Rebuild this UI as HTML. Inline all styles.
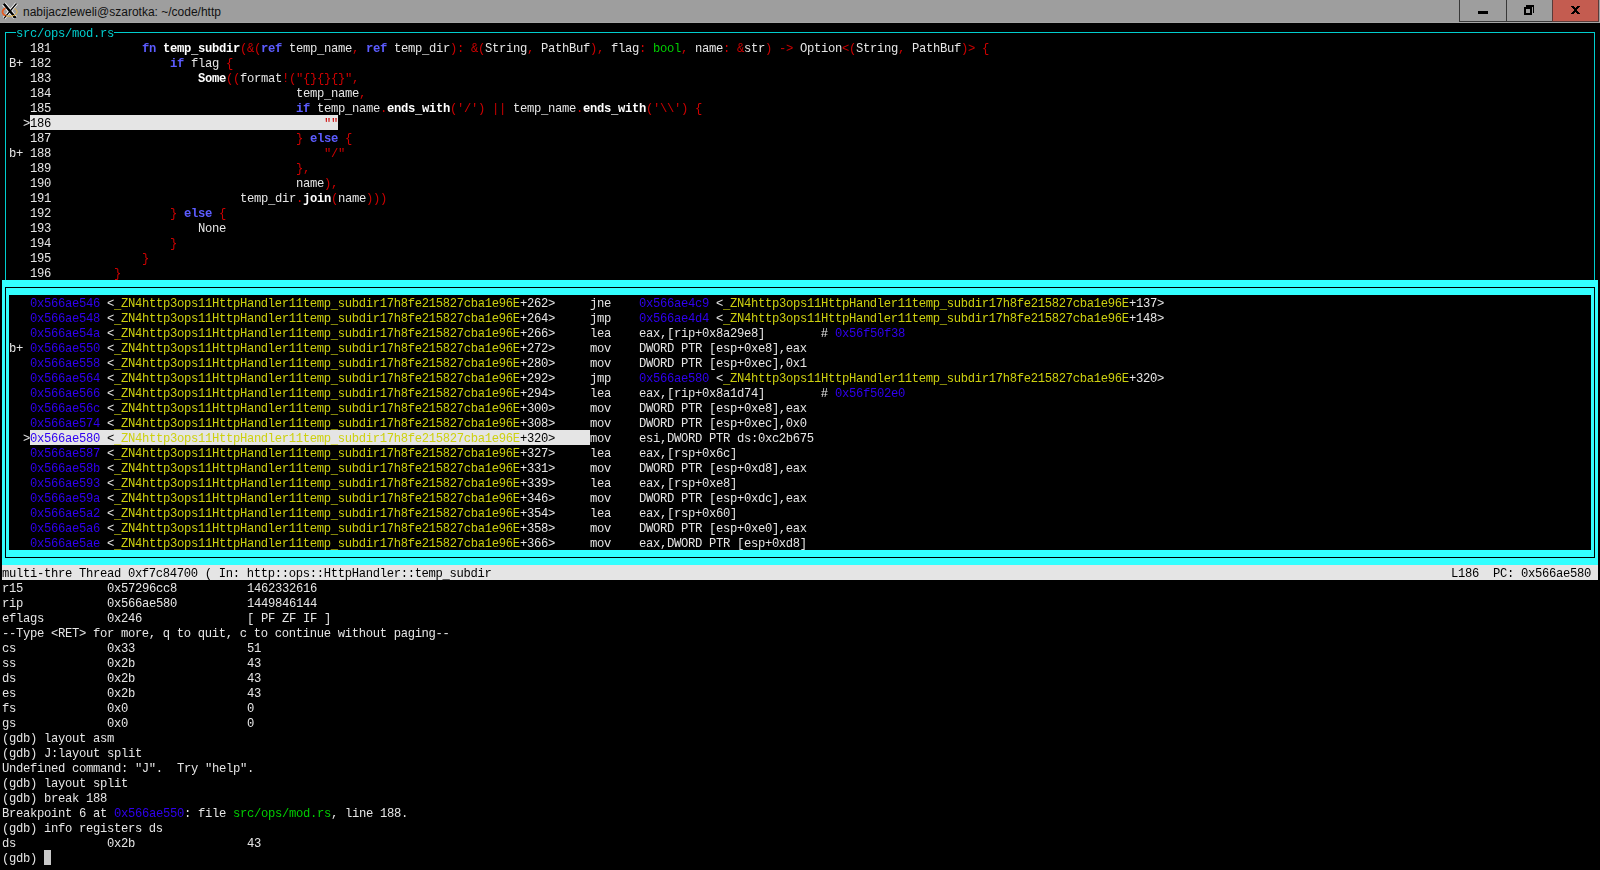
<!DOCTYPE html>
<html><head><meta charset="utf-8">
<style>
html,body{margin:0;padding:0;background:#000;width:1600px;height:870px;overflow:hidden;position:relative}
.a{position:absolute}
#txt{position:absolute;left:0;top:0;width:1600px;height:870px;will-change:transform}
#txt i{font-style:normal;position:relative;top:1px}
#txt span{position:absolute;white-space:pre;font-family:"Liberation Mono",monospace;font-size:12.2px;letter-spacing:-0.3200px;line-height:15px;height:15px;margin-top:2px}
#title{position:absolute;left:0;top:0;width:1600px;height:22px;background:#9e9e9e}
#tl{position:absolute;left:0;top:22px;width:1600px;height:1px;background:#a6a6a6}
#ttext{position:absolute;left:23px;top:4px;font-family:"Liberation Sans",sans-serif;font-size:12px;line-height:16px;color:#111;white-space:pre}
.btn{position:absolute;top:0;height:22px;box-sizing:border-box;border-left:1px solid #383838;border-bottom:1px solid #383838;background:#9e9e9e}
</style></head><body>
<div id="title"></div><div id="tl"></div>
<svg class="a" style="left:0px;top:0px" width="22" height="22" viewBox="0 0 22 22">
  <path d="M3.8 3.8 L15.2 17.5" stroke="#fff" stroke-width="4.2" stroke-linecap="butt"/>
  <path d="M16.5 3.5 L4 18.3" stroke="#fff" stroke-width="3" stroke-linecap="butt"/>
  <path d="M5.5 8 Q2 10 2.5 12.5 Q3 15 6.5 15.8" fill="none" stroke="#e85a20" stroke-width="1.6"/>
  <path d="M3.8 3.8 L15.2 17.5" stroke="#000" stroke-width="2.5" stroke-linecap="butt"/>
  <path d="M16.5 3.5 L4 18.3" stroke="#000" stroke-width="1.3" stroke-linecap="butt"/>
  <path d="M6 15.8 Q11 17.5 15 15 Q18 13 17 11 Q16.5 9.5 14.5 8.5" fill="none" stroke="#e0b048" stroke-width="1"/>
  <path d="M13 16.8 L16 16.5 L16.2 18 L13.5 18 Z" fill="#000"/>
</svg>
<div id="ttext">nabijaczleweli@szarotka: ~/code/http</div>
<div class="btn" style="left:1459px;width:47px"></div>
<div class="a" style="left:1478px;top:11px;width:10px;height:3px;background:#000"></div>
<div class="btn" style="left:1506px;width:47px"></div>
<div class="a" style="left:1526px;top:5px;width:8px;height:8px;box-sizing:border-box;border-top:2px solid #000;border-right:1px solid #000"></div>
<div class="a" style="left:1524px;top:7px;width:8px;height:8px;box-sizing:border-box;border:2px solid #000;background:#9e9e9e"></div>
<div class="btn" style="left:1552px;width:47px;background:#c45c50;border-right:1px solid #5a3a38;border-left-color:#5a3a38;border-bottom-color:#5a3a38"></div>
<svg class="a" style="left:1571px;top:6px" width="9" height="8" viewBox="0 0 9 8" shape-rendering="crispEdges">
  <path d="M0 0h3v1h-3z M6 0h3v1h-3z M1 1h3v1h-3z M5 1h3v1h-3z M2 2h5v1h-5z M3 3h3v2h-3z M2 5h5v1h-5z M1 6h3v1h-3z M5 6h3v1h-3z M0 7h3v1h-3z M6 7h3v1h-3z" fill="#000"/>
</svg>

<!-- src box (cyan lines) -->
<div class="a" style="left:5px;top:32px;width:1590px;height:1px;background:#00cdcd"></div>
<div class="a" style="left:5px;top:32px;width:1px;height:248px;background:#00cdcd"></div>
<div class="a" style="left:1594px;top:32px;width:1px;height:248px;background:#00cdcd"></div>
<div class="a" style="left:16px;top:25px;width:98px;height:15px;background:#000"></div>

<!-- asm box (standout) -->
<div class="a" style="left:2px;top:280px;width:1596px;height:285px;background:#33ffff"></div>
<div class="a" style="left:9px;top:295px;width:1582px;height:255px;background:#000"></div>
<div class="a" style="left:5px;top:287px;width:1590px;height:271px;box-sizing:border-box;border:1px solid #000"></div>

<!-- highlight bars -->
<div class="a" style="left:30px;top:115px;width:308px;height:15px;background:#e5e5e5"></div>
<div class="a" style="left:30px;top:430px;width:560px;height:15px;background:#e5e5e5"></div>
<!-- status -->
<div class="a" style="left:2px;top:565px;width:1596px;height:15px;background:#e5e5e5"></div>
<!-- cursor -->
<div class="a" style="left:44px;top:850px;width:7px;height:15px;background:#c8c8c8"></div>

<div id="txt">
<span style="left:16px;top:25px;color:#00cdcd">src/ops/mod.rs</span>
<span style="left:30px;top:40px;color:#e5e5e5">181</span>
<span style="left:142px;top:40px;color:#5c5cff;font-weight:bold">fn</span>
<span style="left:163px;top:40px;color:#ffffff;font-weight:bold">temp<i>_</i>subdir</span>
<span style="left:240px;top:40px;color:#cd0000">(&amp;(</span>
<span style="left:261px;top:40px;color:#5c5cff;font-weight:bold">ref</span>
<span style="left:282px;top:40px;color:#e5e5e5"> temp<i>_</i>name</span>
<span style="left:352px;top:40px;color:#cd0000">,</span>
<span style="left:366px;top:40px;color:#5c5cff;font-weight:bold">ref</span>
<span style="left:387px;top:40px;color:#e5e5e5"> temp<i>_</i>dir</span>
<span style="left:450px;top:40px;color:#cd0000">): &amp;(</span>
<span style="left:485px;top:40px;color:#e5e5e5">String</span>
<span style="left:527px;top:40px;color:#cd0000">, </span>
<span style="left:541px;top:40px;color:#e5e5e5">PathBuf</span>
<span style="left:590px;top:40px;color:#cd0000">), </span>
<span style="left:611px;top:40px;color:#e5e5e5">flag</span>
<span style="left:639px;top:40px;color:#cd0000">: </span>
<span style="left:653px;top:40px;color:#00cd00">bool</span>
<span style="left:681px;top:40px;color:#cd0000">, </span>
<span style="left:695px;top:40px;color:#e5e5e5">name</span>
<span style="left:723px;top:40px;color:#cd0000">: &amp;</span>
<span style="left:744px;top:40px;color:#e5e5e5">str</span>
<span style="left:765px;top:40px;color:#cd0000">) -&gt; </span>
<span style="left:800px;top:40px;color:#e5e5e5">Option</span>
<span style="left:842px;top:40px;color:#cd0000">&lt;(</span>
<span style="left:856px;top:40px;color:#e5e5e5">String</span>
<span style="left:898px;top:40px;color:#cd0000">, </span>
<span style="left:912px;top:40px;color:#e5e5e5">PathBuf</span>
<span style="left:961px;top:40px;color:#cd0000">)&gt; {</span>
<span style="left:30px;top:55px;color:#e5e5e5">182</span>
<span style="left:170px;top:55px;color:#5c5cff;font-weight:bold">if</span>
<span style="left:184px;top:55px;color:#e5e5e5"> flag </span>
<span style="left:226px;top:55px;color:#cd0000">{</span>
<span style="left:30px;top:70px;color:#e5e5e5">183</span>
<span style="left:198px;top:70px;color:#ffffff;font-weight:bold">Some</span>
<span style="left:226px;top:70px;color:#cd0000">((</span>
<span style="left:240px;top:70px;color:#e5e5e5">format</span>
<span style="left:282px;top:70px;color:#cd0000">!(&quot;{}{}{}&quot;,</span>
<span style="left:30px;top:85px;color:#e5e5e5">184</span>
<span style="left:296px;top:85px;color:#e5e5e5">temp<i>_</i>name</span>
<span style="left:359px;top:85px;color:#cd0000">,</span>
<span style="left:30px;top:100px;color:#e5e5e5">185</span>
<span style="left:296px;top:100px;color:#5c5cff;font-weight:bold">if</span>
<span style="left:310px;top:100px;color:#e5e5e5"> temp<i>_</i>name</span>
<span style="left:380px;top:100px;color:#cd0000">.</span>
<span style="left:387px;top:100px;color:#ffffff;font-weight:bold">ends<i>_</i>with</span>
<span style="left:450px;top:100px;color:#cd0000">(&#x27;/&#x27;) || </span>
<span style="left:513px;top:100px;color:#e5e5e5">temp<i>_</i>name</span>
<span style="left:576px;top:100px;color:#cd0000">.</span>
<span style="left:583px;top:100px;color:#ffffff;font-weight:bold">ends<i>_</i>with</span>
<span style="left:646px;top:100px;color:#cd0000">(&#x27;\\&#x27;) {</span>
<span style="left:23px;top:115px;color:#e5e5e5">&gt;</span>
<span style="left:30px;top:115px;color:#000000">186</span>
<span style="left:324px;top:115px;color:#cd0000">&quot;&quot;</span>
<span style="left:30px;top:130px;color:#e5e5e5">187</span>
<span style="left:296px;top:130px;color:#cd0000">} </span>
<span style="left:310px;top:130px;color:#5c5cff;font-weight:bold">else</span>
<span style="left:338px;top:130px;color:#cd0000"> {</span>
<span style="left:30px;top:145px;color:#e5e5e5">188</span>
<span style="left:324px;top:145px;color:#cd0000">&quot;/&quot;</span>
<span style="left:30px;top:160px;color:#e5e5e5">189</span>
<span style="left:296px;top:160px;color:#cd0000">},</span>
<span style="left:30px;top:175px;color:#e5e5e5">190</span>
<span style="left:296px;top:175px;color:#e5e5e5">name</span>
<span style="left:324px;top:175px;color:#cd0000">),</span>
<span style="left:30px;top:190px;color:#e5e5e5">191</span>
<span style="left:240px;top:190px;color:#e5e5e5">temp<i>_</i>dir</span>
<span style="left:296px;top:190px;color:#cd0000">.</span>
<span style="left:303px;top:190px;color:#ffffff;font-weight:bold">join</span>
<span style="left:331px;top:190px;color:#cd0000">(</span>
<span style="left:338px;top:190px;color:#e5e5e5">name</span>
<span style="left:366px;top:190px;color:#cd0000">)))</span>
<span style="left:30px;top:205px;color:#e5e5e5">192</span>
<span style="left:170px;top:205px;color:#cd0000">} </span>
<span style="left:184px;top:205px;color:#5c5cff;font-weight:bold">else</span>
<span style="left:212px;top:205px;color:#cd0000"> {</span>
<span style="left:30px;top:220px;color:#e5e5e5">193</span>
<span style="left:198px;top:220px;color:#e5e5e5">None</span>
<span style="left:30px;top:235px;color:#e5e5e5">194</span>
<span style="left:170px;top:235px;color:#cd0000">}</span>
<span style="left:30px;top:250px;color:#e5e5e5">195</span>
<span style="left:142px;top:250px;color:#cd0000">}</span>
<span style="left:30px;top:265px;color:#e5e5e5">196</span>
<span style="left:114px;top:265px;color:#cd0000">}</span>
<span style="left:9px;top:55px;color:#e5e5e5">B+</span>
<span style="left:9px;top:145px;color:#e5e5e5">b+</span>
<span style="left:30px;top:295px;color:#3000f0">0x566ae546</span>
<span style="left:107px;top:295px;color:#e5e5e5">&lt;</span>
<span style="left:114px;top:295px;color:#cdd010"><i>_</i>ZN4http3ops11HttpHandler11temp<i>_</i>subdir17h8fe215827cba1e96E</span>
<span style="left:520px;top:295px;color:#e5e5e5">+262&gt;</span>
<span style="left:590px;top:295px;color:#e5e5e5">jne</span>
<span style="left:639px;top:295px;color:#3000f0">0x566ae4c9</span>
<span style="left:709px;top:295px;color:#e5e5e5"> &lt;</span>
<span style="left:723px;top:295px;color:#cdd010"><i>_</i>ZN4http3ops11HttpHandler11temp<i>_</i>subdir17h8fe215827cba1e96E</span>
<span style="left:1129px;top:295px;color:#e5e5e5">+137&gt;</span>
<span style="left:30px;top:310px;color:#3000f0">0x566ae548</span>
<span style="left:107px;top:310px;color:#e5e5e5">&lt;</span>
<span style="left:114px;top:310px;color:#cdd010"><i>_</i>ZN4http3ops11HttpHandler11temp<i>_</i>subdir17h8fe215827cba1e96E</span>
<span style="left:520px;top:310px;color:#e5e5e5">+264&gt;</span>
<span style="left:590px;top:310px;color:#e5e5e5">jmp</span>
<span style="left:639px;top:310px;color:#3000f0">0x566ae4d4</span>
<span style="left:709px;top:310px;color:#e5e5e5"> &lt;</span>
<span style="left:723px;top:310px;color:#cdd010"><i>_</i>ZN4http3ops11HttpHandler11temp<i>_</i>subdir17h8fe215827cba1e96E</span>
<span style="left:1129px;top:310px;color:#e5e5e5">+148&gt;</span>
<span style="left:30px;top:325px;color:#3000f0">0x566ae54a</span>
<span style="left:107px;top:325px;color:#e5e5e5">&lt;</span>
<span style="left:114px;top:325px;color:#cdd010"><i>_</i>ZN4http3ops11HttpHandler11temp<i>_</i>subdir17h8fe215827cba1e96E</span>
<span style="left:520px;top:325px;color:#e5e5e5">+266&gt;</span>
<span style="left:590px;top:325px;color:#e5e5e5">lea</span>
<span style="left:639px;top:325px;color:#e5e5e5">eax,[rip+0x8a29e8]        # </span>
<span style="left:835px;top:325px;color:#3000f0">0x56f50f38</span>
<span style="left:30px;top:340px;color:#3000f0">0x566ae550</span>
<span style="left:107px;top:340px;color:#e5e5e5">&lt;</span>
<span style="left:114px;top:340px;color:#cdd010"><i>_</i>ZN4http3ops11HttpHandler11temp<i>_</i>subdir17h8fe215827cba1e96E</span>
<span style="left:520px;top:340px;color:#e5e5e5">+272&gt;</span>
<span style="left:590px;top:340px;color:#e5e5e5">mov</span>
<span style="left:639px;top:340px;color:#e5e5e5">DWORD PTR [esp+0xe8],eax</span>
<span style="left:30px;top:355px;color:#3000f0">0x566ae558</span>
<span style="left:107px;top:355px;color:#e5e5e5">&lt;</span>
<span style="left:114px;top:355px;color:#cdd010"><i>_</i>ZN4http3ops11HttpHandler11temp<i>_</i>subdir17h8fe215827cba1e96E</span>
<span style="left:520px;top:355px;color:#e5e5e5">+280&gt;</span>
<span style="left:590px;top:355px;color:#e5e5e5">mov</span>
<span style="left:639px;top:355px;color:#e5e5e5">DWORD PTR [esp+0xec],0x1</span>
<span style="left:30px;top:370px;color:#3000f0">0x566ae564</span>
<span style="left:107px;top:370px;color:#e5e5e5">&lt;</span>
<span style="left:114px;top:370px;color:#cdd010"><i>_</i>ZN4http3ops11HttpHandler11temp<i>_</i>subdir17h8fe215827cba1e96E</span>
<span style="left:520px;top:370px;color:#e5e5e5">+292&gt;</span>
<span style="left:590px;top:370px;color:#e5e5e5">jmp</span>
<span style="left:639px;top:370px;color:#3000f0">0x566ae580</span>
<span style="left:709px;top:370px;color:#e5e5e5"> &lt;</span>
<span style="left:723px;top:370px;color:#cdd010"><i>_</i>ZN4http3ops11HttpHandler11temp<i>_</i>subdir17h8fe215827cba1e96E</span>
<span style="left:1129px;top:370px;color:#e5e5e5">+320&gt;</span>
<span style="left:30px;top:385px;color:#3000f0">0x566ae566</span>
<span style="left:107px;top:385px;color:#e5e5e5">&lt;</span>
<span style="left:114px;top:385px;color:#cdd010"><i>_</i>ZN4http3ops11HttpHandler11temp<i>_</i>subdir17h8fe215827cba1e96E</span>
<span style="left:520px;top:385px;color:#e5e5e5">+294&gt;</span>
<span style="left:590px;top:385px;color:#e5e5e5">lea</span>
<span style="left:639px;top:385px;color:#e5e5e5">eax,[rip+0x8a1d74]        # </span>
<span style="left:835px;top:385px;color:#3000f0">0x56f502e0</span>
<span style="left:30px;top:400px;color:#3000f0">0x566ae56c</span>
<span style="left:107px;top:400px;color:#e5e5e5">&lt;</span>
<span style="left:114px;top:400px;color:#cdd010"><i>_</i>ZN4http3ops11HttpHandler11temp<i>_</i>subdir17h8fe215827cba1e96E</span>
<span style="left:520px;top:400px;color:#e5e5e5">+300&gt;</span>
<span style="left:590px;top:400px;color:#e5e5e5">mov</span>
<span style="left:639px;top:400px;color:#e5e5e5">DWORD PTR [esp+0xe8],eax</span>
<span style="left:30px;top:415px;color:#3000f0">0x566ae574</span>
<span style="left:107px;top:415px;color:#e5e5e5">&lt;</span>
<span style="left:114px;top:415px;color:#cdd010"><i>_</i>ZN4http3ops11HttpHandler11temp<i>_</i>subdir17h8fe215827cba1e96E</span>
<span style="left:520px;top:415px;color:#e5e5e5">+308&gt;</span>
<span style="left:590px;top:415px;color:#e5e5e5">mov</span>
<span style="left:639px;top:415px;color:#e5e5e5">DWORD PTR [esp+0xec],0x0</span>
<span style="left:30px;top:430px;color:#3000f0">0x566ae580</span>
<span style="left:107px;top:430px;color:#000000">&lt;</span>
<span style="left:114px;top:430px;color:#cdd010"><i>_</i>ZN4http3ops11HttpHandler11temp<i>_</i>subdir17h8fe215827cba1e96E</span>
<span style="left:520px;top:430px;color:#000000">+320&gt;</span>
<span style="left:590px;top:430px;color:#e5e5e5">mov</span>
<span style="left:639px;top:430px;color:#e5e5e5">esi,DWORD PTR ds:0xc2b675</span>
<span style="left:23px;top:430px;color:#e5e5e5">&gt;</span>
<span style="left:30px;top:445px;color:#3000f0">0x566ae587</span>
<span style="left:107px;top:445px;color:#e5e5e5">&lt;</span>
<span style="left:114px;top:445px;color:#cdd010"><i>_</i>ZN4http3ops11HttpHandler11temp<i>_</i>subdir17h8fe215827cba1e96E</span>
<span style="left:520px;top:445px;color:#e5e5e5">+327&gt;</span>
<span style="left:590px;top:445px;color:#e5e5e5">lea</span>
<span style="left:639px;top:445px;color:#e5e5e5">eax,[rsp+0x6c]</span>
<span style="left:30px;top:460px;color:#3000f0">0x566ae58b</span>
<span style="left:107px;top:460px;color:#e5e5e5">&lt;</span>
<span style="left:114px;top:460px;color:#cdd010"><i>_</i>ZN4http3ops11HttpHandler11temp<i>_</i>subdir17h8fe215827cba1e96E</span>
<span style="left:520px;top:460px;color:#e5e5e5">+331&gt;</span>
<span style="left:590px;top:460px;color:#e5e5e5">mov</span>
<span style="left:639px;top:460px;color:#e5e5e5">DWORD PTR [esp+0xd8],eax</span>
<span style="left:30px;top:475px;color:#3000f0">0x566ae593</span>
<span style="left:107px;top:475px;color:#e5e5e5">&lt;</span>
<span style="left:114px;top:475px;color:#cdd010"><i>_</i>ZN4http3ops11HttpHandler11temp<i>_</i>subdir17h8fe215827cba1e96E</span>
<span style="left:520px;top:475px;color:#e5e5e5">+339&gt;</span>
<span style="left:590px;top:475px;color:#e5e5e5">lea</span>
<span style="left:639px;top:475px;color:#e5e5e5">eax,[rsp+0xe8]</span>
<span style="left:30px;top:490px;color:#3000f0">0x566ae59a</span>
<span style="left:107px;top:490px;color:#e5e5e5">&lt;</span>
<span style="left:114px;top:490px;color:#cdd010"><i>_</i>ZN4http3ops11HttpHandler11temp<i>_</i>subdir17h8fe215827cba1e96E</span>
<span style="left:520px;top:490px;color:#e5e5e5">+346&gt;</span>
<span style="left:590px;top:490px;color:#e5e5e5">mov</span>
<span style="left:639px;top:490px;color:#e5e5e5">DWORD PTR [esp+0xdc],eax</span>
<span style="left:30px;top:505px;color:#3000f0">0x566ae5a2</span>
<span style="left:107px;top:505px;color:#e5e5e5">&lt;</span>
<span style="left:114px;top:505px;color:#cdd010"><i>_</i>ZN4http3ops11HttpHandler11temp<i>_</i>subdir17h8fe215827cba1e96E</span>
<span style="left:520px;top:505px;color:#e5e5e5">+354&gt;</span>
<span style="left:590px;top:505px;color:#e5e5e5">lea</span>
<span style="left:639px;top:505px;color:#e5e5e5">eax,[rsp+0x60]</span>
<span style="left:30px;top:520px;color:#3000f0">0x566ae5a6</span>
<span style="left:107px;top:520px;color:#e5e5e5">&lt;</span>
<span style="left:114px;top:520px;color:#cdd010"><i>_</i>ZN4http3ops11HttpHandler11temp<i>_</i>subdir17h8fe215827cba1e96E</span>
<span style="left:520px;top:520px;color:#e5e5e5">+358&gt;</span>
<span style="left:590px;top:520px;color:#e5e5e5">mov</span>
<span style="left:639px;top:520px;color:#e5e5e5">DWORD PTR [esp+0xe0],eax</span>
<span style="left:30px;top:535px;color:#3000f0">0x566ae5ae</span>
<span style="left:107px;top:535px;color:#e5e5e5">&lt;</span>
<span style="left:114px;top:535px;color:#cdd010"><i>_</i>ZN4http3ops11HttpHandler11temp<i>_</i>subdir17h8fe215827cba1e96E</span>
<span style="left:520px;top:535px;color:#e5e5e5">+366&gt;</span>
<span style="left:590px;top:535px;color:#e5e5e5">mov</span>
<span style="left:639px;top:535px;color:#e5e5e5">eax,DWORD PTR [esp+0xd8]</span>
<span style="left:9px;top:340px;color:#e5e5e5">b+</span>
<span style="left:2px;top:565px;color:#000000">multi-thre Thread 0xf7c84700 ( In: http::ops::HttpHandler::temp<i>_</i>subdir</span>
<span style="left:1451px;top:565px;color:#000000">L186</span>
<span style="left:1493px;top:565px;color:#000000">PC: 0x566ae580</span>
<span style="left:2px;top:580px;color:#e5e5e5">r15</span>
<span style="left:107px;top:580px;color:#e5e5e5">0x57296cc8</span>
<span style="left:247px;top:580px;color:#e5e5e5">1462332616</span>
<span style="left:2px;top:595px;color:#e5e5e5">rip</span>
<span style="left:107px;top:595px;color:#e5e5e5">0x566ae580</span>
<span style="left:247px;top:595px;color:#e5e5e5">1449846144</span>
<span style="left:2px;top:610px;color:#e5e5e5">eflags</span>
<span style="left:107px;top:610px;color:#e5e5e5">0x246</span>
<span style="left:247px;top:610px;color:#e5e5e5">[ PF ZF IF ]</span>
<span style="left:2px;top:625px;color:#e5e5e5">--Type &lt;RET&gt; for more, q to quit, c to continue without paging--</span>
<span style="left:2px;top:640px;color:#e5e5e5">cs</span>
<span style="left:107px;top:640px;color:#e5e5e5">0x33</span>
<span style="left:247px;top:640px;color:#e5e5e5">51</span>
<span style="left:2px;top:655px;color:#e5e5e5">ss</span>
<span style="left:107px;top:655px;color:#e5e5e5">0x2b</span>
<span style="left:247px;top:655px;color:#e5e5e5">43</span>
<span style="left:2px;top:670px;color:#e5e5e5">ds</span>
<span style="left:107px;top:670px;color:#e5e5e5">0x2b</span>
<span style="left:247px;top:670px;color:#e5e5e5">43</span>
<span style="left:2px;top:685px;color:#e5e5e5">es</span>
<span style="left:107px;top:685px;color:#e5e5e5">0x2b</span>
<span style="left:247px;top:685px;color:#e5e5e5">43</span>
<span style="left:2px;top:700px;color:#e5e5e5">fs</span>
<span style="left:107px;top:700px;color:#e5e5e5">0x0</span>
<span style="left:247px;top:700px;color:#e5e5e5">0</span>
<span style="left:2px;top:715px;color:#e5e5e5">gs</span>
<span style="left:107px;top:715px;color:#e5e5e5">0x0</span>
<span style="left:247px;top:715px;color:#e5e5e5">0</span>
<span style="left:2px;top:730px;color:#e5e5e5">(gdb) layout asm</span>
<span style="left:2px;top:745px;color:#e5e5e5">(gdb) J:layout split</span>
<span style="left:2px;top:760px;color:#e5e5e5">Undefined command: &quot;J&quot;.</span>
<span style="left:177px;top:760px;color:#e5e5e5">Try &quot;help&quot;.</span>
<span style="left:2px;top:775px;color:#e5e5e5">(gdb) layout split</span>
<span style="left:2px;top:790px;color:#e5e5e5">(gdb) break 188</span>
<span style="left:2px;top:805px;color:#e5e5e5">Breakpoint 6 at </span>
<span style="left:114px;top:805px;color:#3000f0">0x566ae550</span>
<span style="left:184px;top:805px;color:#e5e5e5">: file </span>
<span style="left:233px;top:805px;color:#00cd00">src/ops/mod.rs</span>
<span style="left:331px;top:805px;color:#e5e5e5">, line 188.</span>
<span style="left:2px;top:820px;color:#e5e5e5">(gdb) info registers ds</span>
<span style="left:2px;top:835px;color:#e5e5e5">ds</span>
<span style="left:107px;top:835px;color:#e5e5e5">0x2b</span>
<span style="left:247px;top:835px;color:#e5e5e5">43</span>
<span style="left:2px;top:850px;color:#e5e5e5">(gdb)</span>
</div>
</body></html>
